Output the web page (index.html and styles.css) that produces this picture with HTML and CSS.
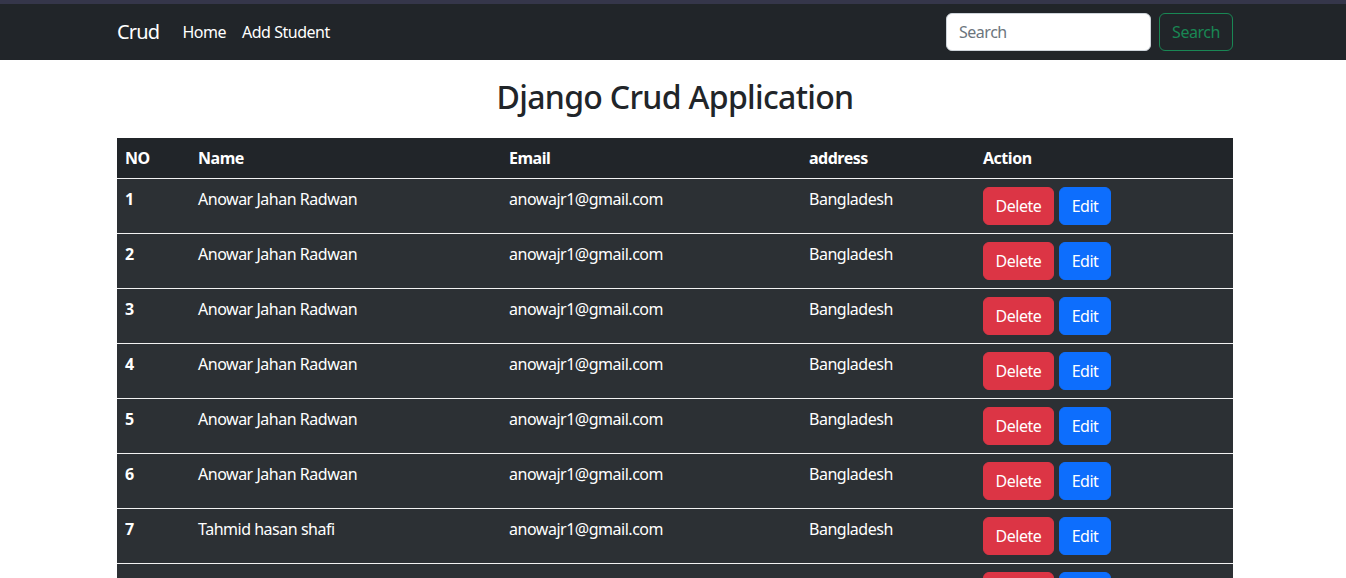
FILE: index.html
```html
<!DOCTYPE html>
<html lang="en">
<head>
<meta charset="utf-8">
<title>Django Crud Application</title>
<link rel="stylesheet" href="styles.css">
</head>
<body>
<div class="topstrip"></div>
<nav class="navbar">
  <div class="container nav-inner">
    <div class="nav-left">
      <a class="brand" href="#">Crud</a>
      <a class="nav-link" href="#">Home</a>
      <a class="nav-link" href="#">Add Student</a>
    </div>
    <form class="search">
      <input class="search-input" type="search" placeholder="Search">
      <button class="btn btn-outline-success" type="button">Search</button>
    </form>
  </div>
</nav>
<main class="container">
  <h2 class="title">Django Crud Application</h2>
  <table class="table">
    <thead>
      <tr><th class="c-no">NO</th><th class="c-name">Name</th><th class="c-email">Email</th><th class="c-addr">address</th><th>Action</th></tr>
    </thead>
    <tbody>
      <tr><th>1</th><td>Anowar Jahan Radwan</td><td>anowajr1@gmail.com</td><td>Bangladesh</td><td><button class="btn btn-danger">Delete</button><button class="btn btn-primary">Edit</button></td></tr>
      <tr><th>2</th><td>Anowar Jahan Radwan</td><td>anowajr1@gmail.com</td><td>Bangladesh</td><td><button class="btn btn-danger">Delete</button><button class="btn btn-primary">Edit</button></td></tr>
      <tr><th>3</th><td>Anowar Jahan Radwan</td><td>anowajr1@gmail.com</td><td>Bangladesh</td><td><button class="btn btn-danger">Delete</button><button class="btn btn-primary">Edit</button></td></tr>
      <tr><th>4</th><td>Anowar Jahan Radwan</td><td>anowajr1@gmail.com</td><td>Bangladesh</td><td><button class="btn btn-danger">Delete</button><button class="btn btn-primary">Edit</button></td></tr>
      <tr><th>5</th><td>Anowar Jahan Radwan</td><td>anowajr1@gmail.com</td><td>Bangladesh</td><td><button class="btn btn-danger">Delete</button><button class="btn btn-primary">Edit</button></td></tr>
      <tr><th>6</th><td>Anowar Jahan Radwan</td><td>anowajr1@gmail.com</td><td>Bangladesh</td><td><button class="btn btn-danger">Delete</button><button class="btn btn-primary">Edit</button></td></tr>
      <tr><th>7</th><td>Tahmid hasan shafi</td><td>anowajr1@gmail.com</td><td>Bangladesh</td><td><button class="btn btn-danger">Delete</button><button class="btn btn-primary">Edit</button></td></tr>
      <tr><th>8</th><td>Tahmid hasan shafi</td><td>anowajr1@gmail.com</td><td>Bangladesh</td><td><button class="btn btn-danger">Delete</button><button class="btn btn-primary">Edit</button></td></tr>
    </tbody>
  </table>
</main>
</body>
</html>
```
FILE: styles.css
```css
* { box-sizing: border-box; }
html { overflow: hidden; }
body {
  margin: 0;
  font-family: "Noto Sans", "Open Sans", sans-serif;
  font-size: 16px;
  line-height: 1.5;
  letter-spacing: -0.03em;
  color: #212529;
  background: #fff;
}
.container {
  width: 1116px;
  margin: 0 auto;
  position: relative;
  left: 2px;
}
.topstrip { height: 4px; background: #35364a; }
.navbar { background: #212529; height: 56px; display: flex; align-items: center; }
.nav-inner { display: flex; align-items: center; justify-content: space-between; }
.nav-left { display: flex; align-items: center; }
.brand { color: #fff; text-decoration: none; font-size: 20px; margin-right: 15px; letter-spacing: -0.04em; }
.nav-link { color: #fff; text-decoration: none; padding: 8px; }
.search { display: flex; align-items: center; gap: 8px; margin: 0; }
.search-input {
  width: 205px; height: 38px;
  border: 1px solid #ced4da; border-radius: 6px;
  padding: 6px 12px; font: inherit; letter-spacing: inherit; color: #212529; background: #fff;
}
.search-input::placeholder { color: #6c757d; }
.btn {
  font: inherit; letter-spacing: inherit; height: 38px; padding: 6px 0; border-radius: 6px;
  border: 1px solid transparent; cursor: pointer; line-height: 24px; text-align: center;
}
.btn-outline-success { background: transparent; color: #198754; border-color: #198754; width: 74px; }
.btn-danger { background: #dc3545; color: #fff; border-color: #dc3545; width: 71px; }
.btn-primary { background: #0d6efd; color: #fff; border-color: #0d6efd; width: 52px; margin-left: 5px; }
.title {
  margin: 0; padding: 18px 0 22px; text-align: center;
  font-size: 32px; font-weight: 500; line-height: 1.2; color: #212529; letter-spacing: -0.68px;
}
.table { width: 100%; border-collapse: collapse; color: #fff; }
.table th, .table td { text-align: left; vertical-align: top; padding: 8px; }
.table thead tr { background: #212529; }
.table thead th { font-weight: 700; }
.table tbody tr { background: #2c3034; border-top: 1px solid #f2f2f2; }
.table tbody th { font-weight: 700; }
.c-no { width: 73px; }
.c-name { width: 311px; }
.c-email { width: 300px; }
.c-addr { width: 174px; }
```
